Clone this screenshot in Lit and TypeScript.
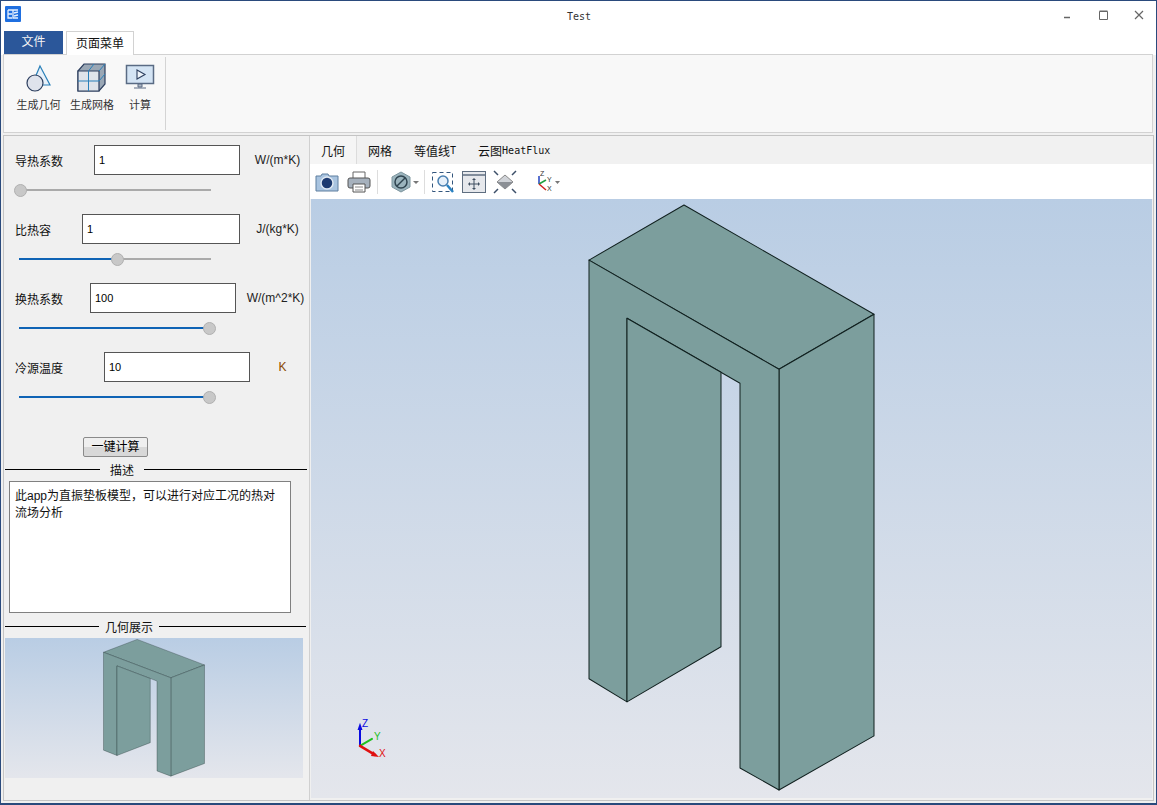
import { LitElement, html, css, svg } from 'lit';
import { customElement, property } from 'lit/decorators.js';

const CJK = `"Liberation Sans", "Noto Sans CJK SC", sans-serif`;

// the part model, in the coordinates of the big viewport
const modelFaces = svg`
  <path fill="#7c9e9d" stroke="#10201f" stroke-width="1" stroke-linejoin="round" d="M685 205 875 314 780 369 590 260Z"/>
  <path fill="#7c9e9d" stroke="#10201f" stroke-width="1" stroke-linejoin="round" d="M780 369 875 314 875 735 780 789Z"/>
  <path fill="#7c9e9d" stroke="#10201f" stroke-width="1" stroke-linejoin="round" d="M590 260 780 369 780 789 741 767 741 383 628 318 628 701 590 678Z"/>
  <path fill="#7c9e9d" stroke="#10201f" stroke-width="1" stroke-linejoin="round" d="M628 318 722 372 722 646 628 701Z"/>
`;

@customElement('model-view')
export class ModelView extends LitElement {
  @property({ type: Boolean })
  triad = false;

  static styles = css`
    :host {
      display: block;
      background: linear-gradient(#b9cde4, #e4e6ec);
      overflow: hidden;
      position: relative;
    }
    svg { display: block; width: 100%; height: 100%; }
    .lbl { font: 10px "Liberation Sans", sans-serif; }
  `;

  render() {
    return html`
      <svg viewBox="312 199 841 598" preserveAspectRatio="none">
        ${modelFaces}
        ${this.triad ? svg`
          <g stroke-linecap="round">
            <path d="M361 745 361 727" stroke="#0a0ae0" stroke-width="2"/>
            <path d="M358.500 729 361 722 363.500 729Z" fill="#0a0ae0"/>
            <path d="M361 745 373 738" stroke="#1fc01f" stroke-width="2"/>
            <path d="M361 745 376 754" stroke="#e01010" stroke-width="2.500"/>
            <path d="M374 750 380 756 372 755Z" fill="#e01010"/>
          </g>
          <text class="lbl" x="363" y="726" fill="#0a0ae0">Z</text>
          <text class="lbl" x="375" y="739" fill="#1fc01f">Y</text>
          <text class="lbl" x="380" y="756" fill="#e01010">X</text>
        ` : ''}
      </svg>
    `;
  }
}

@customElement('param-row')
export class ParamRow extends LitElement {
  @property() label = '';
  @property() value = '';
  @property() unit = '';
  @property({ type: Number }) pos = 0;
  @property({ type: Number }) inputWidth = 146;
  @property({ type: Number }) unitWidth = 58;
  @property() unitColor = '#222';

  static styles = css`
    :host { display: block; height: 69px; }
    .line { display: flex; align-items: center; height: 30px; padding-left: 11px; }
    .name { flex: 1; font-size: 12px; color: #111; white-space: nowrap; }
    .field {
      box-sizing: border-box;
      height: 30px;
      border: 1px solid #555;
      background: #fff;
      padding-left: 4px;
      font-size: 11px;
      line-height: 28px;
      color: #000;
    }
    .unit { font-size: 12px; text-align: center; margin-left: 6px; white-space: nowrap; }
    .slider { position: relative; height: 2px; margin: 14px 0 0 15px; width: 192px; background: #aaa; }
    .fill { height: 2px; background: #0f63b5; }
    .knob {
      position: absolute;
      top: -5px;
      width: 11px;
      height: 11px;
      margin-left: -5px;
      border-radius: 50%;
      background: #c8c8c8;
      border: 1px solid #b0b0b0;
    }
  `;

  render() {
    return html`
      <div class="line">
        <span class="name">${this.label}</span>
        <div class="field" style="width:${this.inputWidth}px">${this.value}</div>
        <span class="unit" style="width:${this.unitWidth}px;color:${this.unitColor}">${this.unit}</span>
      </div>
      <div class="slider">
        <div class="fill" style="width:${this.pos}px"></div>
        <div class="knob" style="left:${this.pos}px"></div>
      </div>
    `;
  }
}

@customElement('app-root')
export class AppRoot extends LitElement {
  static styles = css`
    :host {
      display: flex;
      flex-direction: column;
      box-sizing: border-box;
      width: 1157px;
      height: 805px;
      border: 1px solid #2a4a7c;
      border-bottom-width: 2px;
      background: #f0f0f0;
      font-family: ${css([CJK] as any as TemplateStringsArray)};
      overflow: hidden;
    }
    .title {
      display: flex;
      align-items: center;
      height: 30px;
      flex: none;
      background: #fff;
      position: relative;
    }
    .appicon { margin: -4px 0 0 4px; }
    .title-text {
      position: absolute;
      left: 0;
      right: 0;
      top: 10px;
      text-align: center;
      font: 10px "DejaVu Sans Mono", monospace;
      color: #333;
      padding-left: 1px;
    }
    .winbtns { margin-left: auto; display: flex; margin-top: -2px; }
    .winbtn { width: 35px; height: 20px; display: flex; align-items: center; justify-content: center; }
    .tabs {
      display: flex;
      height: 24px;
      flex: none;
      background: #fff;
      padding-left: 3px;
      box-sizing: border-box;
    }
    .file-tab {
      width: 59px;
      height: 23px;
      margin-top: 0;
      background: #2b579a;
      color: #f4f4f4;
      font-size: 12px;
      text-align: center;
      line-height: 23px;
    }
    .page-tab {
      margin-left: 3px;
      width: 68px;
      height: 24px;
      box-sizing: border-box;
      border: 1px solid #d2d2d2;
      border-bottom: none;
      background: #fff;
      position: relative;
      top: 0;
      font-size: 12px;
      text-align: center;
      line-height: 24px;
      color: #111;
      z-index: 1;
    }
    .ribbon {
      display: flex;
      height: 79px;
      flex: none;
      box-sizing: border-box;
      margin: -1px 3px 0 2px;
      border: 1px solid #d2d2d2;
      background: #f8f8f8;
      padding: 2px 0 2px 0;
    }
    .group { display: flex; width: 162px; border-right: 1px solid #d4d4d4; box-sizing: border-box; }
    .rbtn { display: flex; flex-direction: column; align-items: center; font-size: 11px; color: #333; white-space: nowrap; padding-top: 6px; }
    .rbtn svg { display: block; height: 30px; margin-bottom: 3px; }
    .main {
      flex: 1;
      display: flex;
      margin: 2px 2px 2px 2px;
      border: 1px solid #c4c4c4;
      min-height: 0;
    }
    .left { width: 306px; flex: none; box-sizing: border-box; padding-top: 9px; border-right: 1px solid #d0d0d0; }
    .calc {
      display: block;
      box-sizing: border-box;
      width: 65px;
      height: 20px;
      margin: 16px 0 0 79px;
      border: 1px solid #8a8a8a;
      border-radius: 2px;
      background: linear-gradient(#efefef 50%, #d8d8d8 50%);
      font-size: 12px;
      line-height: 18px;
      text-align: center;
      color: #000;
    }
    .sep { display: flex; align-items: center; height: 16px; font-size: 12px; color: #111; }
    .sep i { display: block; height: 1px; background: #000; }
    .desc {
      box-sizing: border-box;
      width: 282px;
      height: 132px;
      margin: 4px 0 0 5px;
      border: 1px solid #808080;
      background: #fff;
      padding: 6px 5px;
      font-size: 12px;
      line-height: 17px;
      color: #111;
    }
    .preview { width: 298px; height: 140px; margin: 4px 0 0 1px; position: relative; }
    .right { flex: 1; display: flex; flex-direction: column; min-width: 0; }
    .vtabs { display: flex; height: 28px; flex: none; background: #f1f1f1; font-size: 12px; color: #111; align-items: center; }
    .vtab { height: 100%; display: flex; align-items: center; padding: 0 11px; box-sizing: border-box; }
    .vtab.on { border-right: 1px solid #dcdcdc; background: #f5f5f5; }
    .vtab b { font: 10px "DejaVu Sans Mono", monospace; }
    .tools { display: flex; align-items: center; height: 35px; flex: none; background: #fff; padding-left: 5px; box-sizing: border-box; }
    .tools svg { display: block; flex: none; }
    .tsep { width: 1px; height: 24px; background: #ddd; margin: 0 5px; flex: none; }
    model-view.big { flex: 1; margin: 0 1px 2px 1px; }
  `;

  render() {
    return html`
      <div class="title">
        <svg class="appicon" width="16" height="16" viewBox="0 0 16 16">
          <rect width="16" height="16" rx="1" fill="#1f6fe0"/>
          <path d="M3 4h10M3 4v8h4M8 4v8h5M3 8h4M9 7l4-1M9 10l4-1M3 12h4" stroke="#e8f2ff" stroke-width="1.300" fill="none"/>
        </svg>
        <div class="title-text">Test</div>
        <div class="winbtns">
          <div class="winbtn"><svg width="10" height="10" viewBox="0 0 10 10"><path d="M0 7.500h6" stroke="#666" stroke-width="1.500"/></svg></div>
          <div class="winbtn"><svg width="10" height="10" viewBox="0 0 10 10"><path d="M.5 1.500h8v8h-8zM.5 1h8" stroke="#666" fill="none"/></svg></div>
          <div class="winbtn"><svg width="10" height="10" viewBox="0 0 10 10"><path d="M1 1l8 8M9 1l-8 8" stroke="#666" stroke-width="1.200"/></svg></div>
        </div>
      </div>
      <div class="tabs">
        <div class="file-tab">文件</div>
        <div class="page-tab">页面菜单</div>
      </div>
      <div class="ribbon">
        <div class="group">
          <div class="rbtn" style="width:49px;margin-left:10px">
            <svg width="30" height="30" viewBox="0 0 30 30">
              <path d="M16 3 26 22H8Z" fill="#e8f1fa" stroke="#2a80b9" stroke-width="1.200"/>
              <circle cx="11" cy="20" r="8" fill="#dfe3ec" stroke="#2d3f5f" stroke-width="1.200"/>
            </svg>
            生成几何
          </div>
          <div class="rbtn" style="width:56px;margin-left:1px">
            <svg width="30" height="30" viewBox="0 0 30 30">
              <path d="M1 8 7 1H28V21L22 28H1Z" fill="#9aa7b5" stroke="#2d3f5f" stroke-width="1.200"/>
              <path d="M1 8H22V28H1Z" fill="#dfe4ea" stroke="#2d3f5f" stroke-width="1.200"/>
              <path d="M11.500 8V28M1 18H22" stroke="#2a80b9" stroke-width="1"/>
              <path d="M22 8 28 1M11.500 8 17 1M22 18 28 11" stroke="#2a80b9" stroke-width="1"/>
            </svg>
            生成网格
          </div>
          <div class="rbtn" style="width:36px;margin-left:2px">
            <svg width="30" height="30" viewBox="0 0 30 30">
              <rect x="1.500" y="2.500" width="27" height="18" fill="#d4e4f4" stroke="#5a6b84" stroke-width="1.500"/>
              <path d="M12 7 20 11.500 12 16Z" fill="#eef4fa" stroke="#2d3f5f" stroke-width="1.100"/>
              <path d="M13 21h4v3h-4zM9 25h12" fill="#b0bac6" stroke="#5a6b84"/>
            </svg>
            计算
          </div>
        </div>
      </div>
      <div class="main">
        <div class="left">
          <param-row label="导热系数" value="1" unit="W/(m*K)" .pos=${0} .inputWidth=${146} .unitWidth=${63}></param-row>
          <param-row label="比热容" value="1" unit="J/(kg*K)" .pos=${97} .inputWidth=${158} .unitWidth=${63}></param-row>
          <param-row label="换热系数" value="100" unit="W/(m^2*K)" .pos=${189} .inputWidth=${146} .unitWidth=${67}></param-row>
          <param-row label="冷源温度" value="10" unit="K" unitColor="#8a4a00" .pos=${189} .inputWidth=${146} .unitWidth=${53}></param-row>
          <div class="calc">一键计算</div>
          <div class="sep" style="margin-top:4px">
            <i style="width:95px;margin-left:1px"></i><span style="margin:0 10px">描述</span><i style="width:163px"></i>
          </div>
          <div class="desc">此app为直振垫板模型，可以进行对应工况的热对流场分析</div>
          <div class="sep" style="margin-top:5px">
            <i style="width:94px;margin-left:1px"></i><span style="margin:0 6px">几何展示</span><i style="width:147px"></i>
          </div>
          <model-view class="preview"></model-view>
        </div>
        <div class="right">
          <div class="vtabs">
            <div class="vtab on">几何</div>
            <div class="vtab">网格</div>
            <div class="vtab">等值线<b>T</b></div>
            <div class="vtab">云图<b>HeatFlux</b></div>
          </div>
          <div class="tools">
            <svg width="24" height="24" viewBox="0 0 24 24">
              <path d="M1 6h5l1-2h6l1 2h9v15H1Z" fill="#a9c4e0" stroke="#5f7f9f"/>
              <circle cx="12" cy="13" r="6" fill="#1d3a70" stroke="#dfe8f2" stroke-width="1.500"/>
            </svg>
            <svg style="margin-left:8px" width="24" height="24" viewBox="0 0 24 24">
              <path d="M6 9V2h12v7" fill="#fff" stroke="#666"/>
              <rect x="1" y="8" width="22" height="10" rx="2" fill="#a6b1bd" stroke="#555"/>
              <path d="M6 14h12v8H6Z" fill="#fff" stroke="#555"/>
              <path d="M8 17h8M8 20h8" stroke="#888"/>
            </svg>
            <div class="tsep" style="margin-left:6px"></div>
            <svg style="margin-left:8px" width="30" height="24" viewBox="0 0 30 24">
              <path d="M10 2 19 7V17L10 22 1 17V7Z" fill="#9bb4bd" stroke="#7d959e"/>
              <circle cx="10" cy="12" r="6" fill="none" stroke="#2f4450" stroke-width="1.500"/>
              <path d="M6 16 14 8" stroke="#2f4450" stroke-width="1.500"/>
              <path d="M22 11h6l-3 3Z" fill="#777"/>
            </svg>
            <div class="tsep" style="margin:0 3px 0 3px"></div>
            <svg style="margin-left:3px" width="24" height="24" viewBox="0 0 24 24">
              <rect x="1.500" y="2.500" width="20" height="19" fill="none" stroke="#32557d" stroke-dasharray="4 3"/>
              <circle cx="12" cy="11" r="5" fill="#e6f0fa" stroke="#4a7fb0" stroke-width="1.500"/>
              <path d="M16 15 22 22" stroke="#2a80c0" stroke-width="2.500"/>
            </svg>
            <svg style="margin-left:7px" width="24" height="24" viewBox="0 0 24 24">
              <rect x=".5" y="1.500" width="23" height="21" fill="#e6e8ec" stroke="#5f6e80"/>
              <path d="M1 5h22" stroke="#5f6e80" stroke-width="1.500"/>
              <path d="M12 9v10M7 14h10" stroke="#3f4e60"/>
              <path d="M12 8l-2 2h4ZM12 20l-2-2h4ZM6 14l2-2v4ZM18 14l-2-2v4Z" fill="#3f4e60"/>
            </svg>
            <svg style="margin-left:7px" width="24" height="24" viewBox="0 0 24 24">
              <path d="M12 5 20 12 12 19 4 12Z" fill="#d0d3d8" stroke="#888"/>
              <path d="M4 12h16L12 19Z" fill="#8b8f95"/>
              <path d="M1 1l4 4M23 1l-4 4M1 23l4-4M23 23l-4-4" stroke="#3c4f68" stroke-width="1.500"/>
            </svg>
            <svg style="margin-left:13px" width="32" height="24" viewBox="0 0 32 24">
              <path d="M9 14V6" stroke="#2040c0" stroke-width="1.500"/>
              <path d="M9 14l7-4" stroke="#20a040" stroke-width="1.500"/>
              <path d="M9 14l7 6" stroke="#d02020" stroke-width="1.500"/>
              <text x="10" y="6" font-size="7" font-family="Liberation Sans" fill="#333">Z</text>
              <text x="17" y="12" font-size="7" font-family="Liberation Sans" fill="#333">Y</text>
              <text x="17" y="21" font-size="7" font-family="Liberation Sans" fill="#333">X</text>
              <path d="M25 11h5l-2.500 3Z" fill="#777"/>
            </svg>
          </div>
          <model-view class="big" triad></model-view>
        </div>
      </div>
    `;
  }
}
